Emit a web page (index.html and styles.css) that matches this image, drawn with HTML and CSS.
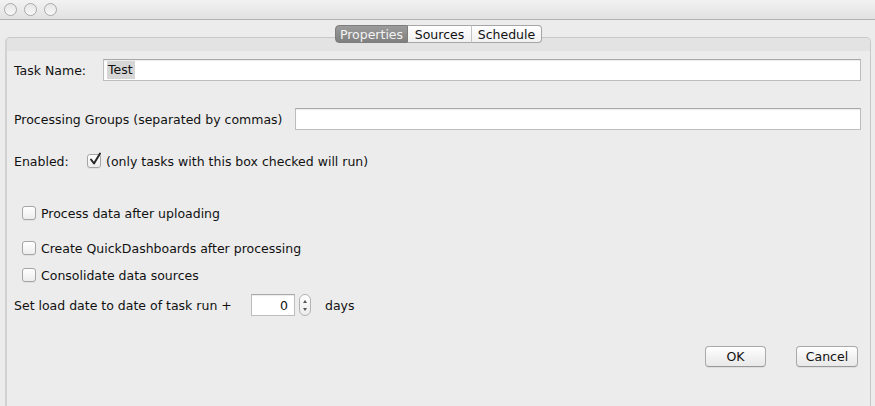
FILE: index.html
```html
<!DOCTYPE html>
<html>
<head>
<meta charset="utf-8">
<link rel="stylesheet" href="styles.css">
</head>
<body>
<div class="titlebar">
  <span class="light"></span><span class="light"></span><span class="light"></span>
</div>
<div class="content">
  <div class="tabs">
    <div class="tab selected">Properties</div>
    <div class="tab t-sources">Sources</div>
    <div class="tab t-schedule">Schedule</div>
  </div>
  <div class="panel">
    <div class="band"></div>
    <div class="row row1">
      <span class="label lbl-task">Task Name:</span>
      <div class="input grow"><span class="sel">Test</span></div>
    </div>
    <div class="row row2">
      <span class="label lbl-groups">Processing Groups (separated by commas)</span>
      <div class="input grow"></div>
    </div>
    <div class="row row3">
      <span class="label lbl-enabled">Enabled:</span>
      <span class="check checked">
        <svg width="14" height="15" viewBox="0 0 14 15"><path d="M3 7.5 L6 11.5 L12 1.5" fill="none" stroke="#2a2a2a" stroke-width="2" stroke-linecap="round" stroke-linejoin="round"/></svg>
      </span>
      <span class="label after-check">(only tasks with this box checked will run)</span>
    </div>
    <div class="row row4 cbrow">
      <span class="check"></span><span class="label">Process data after uploading</span>
    </div>
    <div class="row row5 cbrow">
      <span class="check"></span><span class="label">Create QuickDashboards after processing</span>
    </div>
    <div class="row row6 cbrow">
      <span class="check"></span><span class="label">Consolidate data sources</span>
    </div>
    <div class="row row7">
      <span class="label lbl-load">Set load date to date of task run +</span>
      <div class="input spin-input">0</div>
      <div class="spinner">
        <svg width="12" height="21" viewBox="0 0 12 21"><path d="M4 8 L6 5 L8 8 Z" fill="#555"/><path d="M4 13 L6 16 L8 13 Z" fill="#555"/></svg>
      </div>
      <span class="label days">days</span>
    </div>
    <div class="buttons">
      <div class="btn btn-ok">OK</div>
      <div class="btn btn-cancel">Cancel</div>
    </div>
  </div>
</div>
</body>
</html>
```
FILE: styles.css
```css
* { box-sizing: border-box; }
html, body {
  margin: 0;
  padding: 0;
  width: 875px;
  height: 406px;
  overflow: hidden;
  background: #ececec;
  font-family: "DejaVu Sans", "Liberation Sans", sans-serif;
  font-size: 12.5px;
  color: #111;
}
.titlebar {
  height: 20px;
  background: linear-gradient(#f2f2f2, #e2e2e2);
  border-bottom: 1px solid #b3b3b3;
  display: flex;
  align-items: center;
  padding-left: 4px;
  gap: 7px;
}
.light {
  width: 13px;
  height: 13px;
  border-radius: 50%;
  border: 1px solid #a9a9a9;
  background: linear-gradient(#e6e6e6, #f8f8f8);
}
.content {
  padding: 5px 4px 0 5px;
}
.tabs {
  position: relative;
  z-index: 1;
  display: flex;
  justify-content: center;
  height: 18px;
  margin-left: 1px;
}
.tab {
  height: 18px;
  border: 1px solid #a6a6a6;
  border-left: none;
  background: linear-gradient(#ffffff, #f1f1f1);
  display: flex;
  align-items: center;
  justify-content: center;
  font-size: 12.5px;
  color: #111;
}
.tab.selected {
  width: 73px;
  border-left: 1px solid #8a8a8a;
  border-color: #7d7d7d;
  border-radius: 4px 0 0 4px;
  background: linear-gradient(#9c9c9c, #7f7f7f);
  color: #f4f4f4;
}
.t-sources { width: 64px; border-right-color: #c4c4c4; }
.t-schedule { width: 70px; border-radius: 0 4px 4px 0; border-right-color: #a6a6a6; }
.panel {
  margin-top: -6px;
  height: 375px;
  border: 1px solid #c8c8c8;
  border-left: 2px solid #d2d2d2;
  border-bottom: none;
  border-radius: 5px 5px 0 0;
  background: #ececec;
  padding: 0 9px 0 7px;
  display: flex;
  flex-direction: column;
}
.band {
  height: 13px;
  margin: 0 -9px 0 -7px;
  background: #e3e3e3;
  border-radius: 4px 4px 0 0;
}
.row {
  display: flex;
  align-items: center;
}
.label { white-space: nowrap; }
.input {
  height: 22px;
  background: #fff;
  border: 1px solid #bdbdbd;
  border-top-color: #a9a9a9;
  box-shadow: inset 0 1px 1px rgba(0,0,0,0.08);
  display: flex;
  align-items: center;
}
.grow { flex: 1; }
.row1 { height: 22px; margin-top: 8px; }
.lbl-task { width: 89px; }
.sel {
  margin-left: 3px;
  background: #d6d6d6;
  padding: 1px 2px 1px 1px;
  line-height: 16px;
}
.row2 { height: 22px; margin-top: 27px; }
.lbl-groups { width: 281px; }
.row3 { height: 16px; margin-top: 23px; }
.lbl-enabled { width: 73px; }
.check {
  width: 14px;
  height: 14px;
  border: 1px solid #a5a5a5;
  border-radius: 3px;
  background: linear-gradient(#ffffff, #ededed);
  box-shadow: 0 1px 0 rgba(0,0,0,0.05);
  position: relative;
  flex: none;
}
.check svg { position: absolute; left: 0; top: -3px; }
.after-check { margin-left: 5px; }
.cbrow .check { margin-left: 8px; margin-right: 5px; }
.row4 { height: 16px; margin-top: 36px; }
.row5 { height: 16px; margin-top: 19px; }
.row6 { height: 16px; margin-top: 11px; }
.row7 { height: 22px; margin-top: 11px; }
.lbl-load { width: 237px; }
.spin-input {
  width: 44px;
  height: 22px;
  justify-content: flex-end;
  padding-right: 6px;
}
.spinner {
  width: 12px;
  height: 22px;
  margin-left: 4px;
  border: 1px solid #b3b3b3;
  border-radius: 6px;
  background: linear-gradient(#ffffff, #ececec);
  display: flex;
  align-items: center;
  justify-content: center;
}
.spinner svg { flex: none; }
.days { margin-left: 14px; }
.buttons {
  display: flex;
  justify-content: flex-end;
  gap: 30px;
  margin-top: 30px;
  padding-right: 3px;
}
.btn {
  height: 21px;
  border: 1px solid #a9a9a9;
  border-bottom-color: #999;
  border-radius: 4px;
  background: linear-gradient(#ffffff, #f0f0f0 60%, #e9e9e9);
  box-shadow: 0 1px 0 rgba(0,0,0,0.06);
  display: flex;
  align-items: center;
  justify-content: center;
  color: #111;
}
.btn-ok { width: 61px; }
.btn-cancel { width: 62px; }
```
